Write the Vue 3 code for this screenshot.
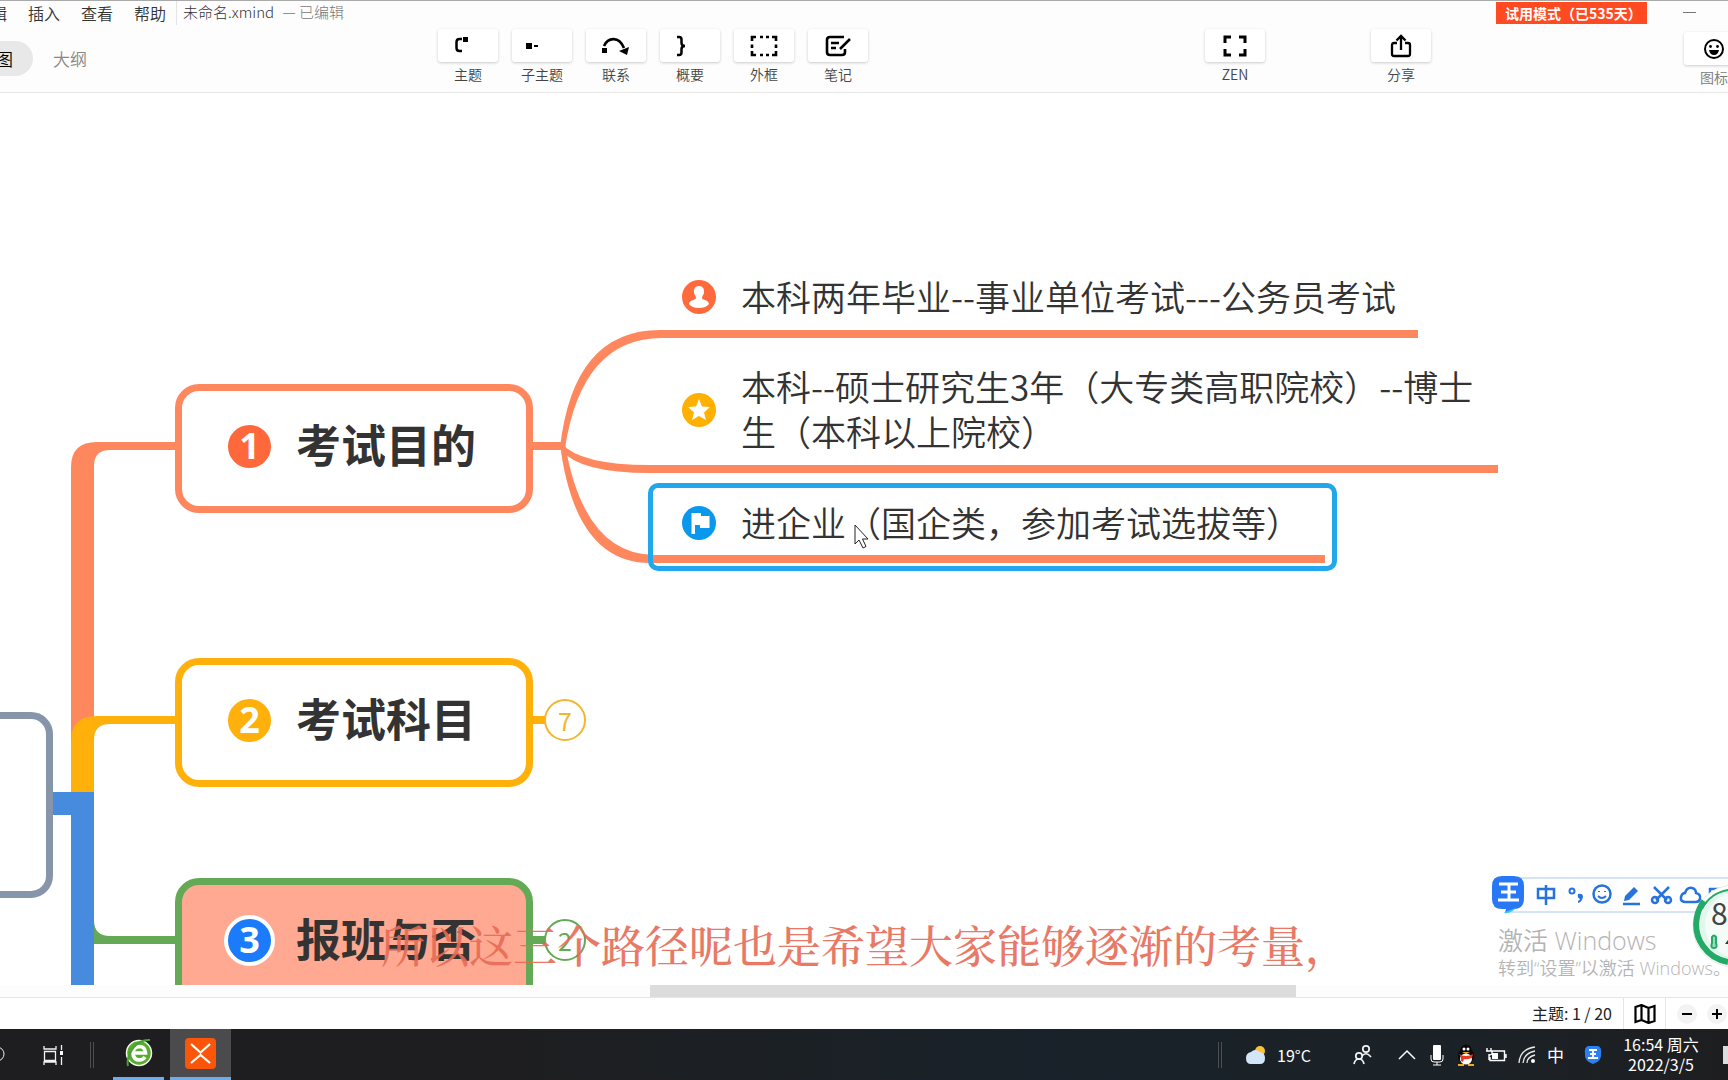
<script setup>
const menus = ['编辑', '插入', '查看', '帮助']

const tools = [
  { id: 'topic', label: '主题' },
  { id: 'subtopic', label: '子主题' },
  { id: 'relation', label: '联系' },
  { id: 'summary', label: '概要' },
  { id: 'boundary', label: '外框' },
  { id: 'note', label: '笔记' }
]
</script>

<template>
  <div class="app">
    <header class="header">
      <div class="title-row">
        <nav class="menus">
          <button v-for="m in menus" :key="m" type="button">{{ m }}</button>
        </nav>
        <p class="file">未命名.xmind <span>— 已编辑</span></p>
        <strong class="trial">试用模式（已535天）</strong>
        <button class="minimize" type="button" aria-label="最小化"></button>
      </div>

      <div class="tool-row">
        <div class="views">
          <button class="view active" type="button">思维导图</button>
          <button class="view" type="button">大纲</button>
        </div>
        <div class="tools">
          <button v-for="t in tools" :key="t.id" class="tool" type="button">
            <span class="tile">
              <svg v-if="t.id === 'topic'" width="32" height="26" viewBox="0 0 32 26">
                <path d="M10 6H7.500Q4.500 6 4.500 9V15Q4.500 18 7.500 18H10" fill="none" stroke="#000" stroke-width="2.500" />
                <rect x="11" y="4" width="5" height="5" />
              </svg>
              <svg v-else-if="t.id === 'subtopic'" width="32" height="26" viewBox="0 0 32 26">
                <rect x="0" y="10" width="6" height="6" /><rect x="8" y="12" width="4" height="2" />
              </svg>
              <svg v-else-if="t.id === 'relation'" width="32" height="26" viewBox="0 0 32 26">
                <path d="M4 13C8 4 19 3 24 15" fill="none" stroke="#000" stroke-width="2.600" />
                <rect x="2" y="15" width="5" height="5" /><path d="M19 18L29 14L27 22Z" />
              </svg>
              <svg v-else-if="t.id === 'summary'" width="32" height="26" viewBox="0 0 32 26">
                <path d="M3 4H5Q7.500 4 7.500 6.500V10Q7.500 13 11 13Q7.500 13 7.500 16V19.500Q7.500 22 5 22H3" fill="none" stroke="#000" stroke-width="2.500" />
              </svg>
              <svg v-else-if="t.id === 'boundary'" width="32" height="26" viewBox="0 0 32 26">
                <path d="M4 8V4H8M12 4H15M18 4H21M24 4H28V8M28 11.500V15M28 18V22H24M21 22H18M15 22H12M8 22H4V18M4 15V11.500" fill="none" stroke="#000" stroke-width="2.600" />
              </svg>
              <svg v-else width="32" height="26" viewBox="0 0 32 26">
                <path d="M22 4H8Q5 4 5 7V19Q5 22 8 22H20Q23 22 23 19V16M9 10H17M9 15H14M18 16L28 6" fill="none" stroke="#000" stroke-width="2.600" />
              </svg>
            </span>
            {{ t.label }}
          </button>
        </div>
        <div class="extras">
          <button class="tool zen" type="button">
            <span class="tile">
              <svg width="26" height="24" viewBox="0 0 26 24">
                <path d="M3 9V3H9M17 3H23V9M23 15V21H17M9 21H3V15" fill="none" stroke="#000" stroke-width="3" />
              </svg>
            </span>
            ZEN
          </button>
          <button class="tool share" type="button">
            <span class="tile">
              <svg width="24" height="24" viewBox="0 0 24 24">
                <path d="M8 9H5Q3 9 3 11V20Q3 22 5 22H19Q21 22 21 20V11Q21 9 19 9H16M12 16V2.500M7.500 6.500L12 2L16.500 6.500" fill="none" stroke="#000" stroke-width="2.300" />
              </svg>
            </span>
            分享
          </button>
          <button class="tool sticker" type="button">
            <span class="tile">
              <svg width="22" height="22" viewBox="0 0 22 22">
                <circle cx="11" cy="11" r="9" fill="none" stroke="#000" stroke-width="2" />
                <circle cx="7.500" cy="8.500" r="1.400" /><circle cx="14.500" cy="8.500" r="1.400" />
                <path d="M6 12H16Q15 17 11 17Q7 17 6 12Z" />
              </svg>
            </span>
            图标
          </button>
        </div>
      </div>
    </header>

    <main class="canvas">
      <svg class="links" aria-hidden="true">
        <path class="coral" d="M175 349H97Q71 349 71 374V699H94V373Q94 357 110 357H175Z" />
        <path class="amber" d="M175 623H97Q71 623 71 648V699H94V647Q94 631 110 631H175Z" />
        <path class="green" d="M94 827Q94 843 110 843H175V851H94Z" />
        <path class="blue" d="M53 699H94V900H71V722H53Z" />
        <path class="coral" d="M533 349H562V357H533Z" />
        <path class="coral" d="M560 355Q573 237 660 237H1418V245H662Q582 245 565 355Z" />
        <path class="coral" d="M561 350Q580 372 650 372H1498V380H650Q580 380 561 357Z" />
        <path class="coral" d="M560 351Q575 470 650 470H1325V462H655Q584 462 565 351Z" />
        <path class="amber" d="M533 623H545V631H533Z" />
        <path class="green" d="M533 843H545V851H533Z" />
      </svg>

      <div class="root-node"></div>

      <section class="node one">
        <span class="num">1</span><h2>考试目的</h2>
      </section>
      <section class="node two">
        <span class="num">2</span><h2>考试科目</h2>
      </section>
      <section class="node three">
        <span class="num">3</span><h2>报班与否</h2>
      </section>
      <button class="count seven" type="button">7</button>
      <button class="count pair" type="button">2</button>

      <div class="leaf first">
        <svg width="34" height="34" viewBox="0 0 34 34">
          <circle cx="17" cy="17" r="17" fill="#ff6a3d" />
          <path d="M17 6C21 6 22.500 9 22 12.500C21.700 15 20 16 20 18C20 20 27 20 27 24Q24 28 17 28Q10 28 7 24C7 20 14 20 14 18C14 16 12.300 15 12 12.500C11.500 9 13 6 17 6Z" fill="#fff" />
        </svg>
        <p>本科两年毕业--事业单位考试---公务员考试</p>
      </div>
      <div class="leaf second">
        <svg width="34" height="34" viewBox="0 0 34 34">
          <circle cx="17" cy="17" r="17" fill="#ffb000" />
          <path d="M17 6L20 13.500L28 14L22 19.500L24 27L17 23L10 27L12 19.500L6 14L14 13.500Z" fill="#fff" />
        </svg>
        <p>本科--硕士研究生3年（大专类高职院校）--博士<br>生（本科以上院校）</p>
      </div>
      <div class="leaf third">
        <svg width="34" height="34" viewBox="0 0 34 34">
          <circle cx="17" cy="17" r="17" fill="#0a98ee" />
          <path d="M9.500 7H19V10H27.500V22H18V19H13V28H9.500Z" fill="#fff" />
        </svg>
        <p>进企业（国企类，参加考试选拔等）</p>
      </div>
      <div class="selection"></div>

      <svg class="cursor" width="16" height="26" viewBox="0 0 16 26">
        <path d="M1 1V20L5 16L9 24L12 22.500L8.500 15H14Z" fill="#fff" stroke="#222" />
      </svg>
      <p class="caption">所以这三个路径呢也是希望大家能够逐渐的考量，</p>
      <div class="watermark">
        <p>激活 Windows</p>
        <small>转到“设置”以激活 Windows。</small>
      </div>

      <div class="ime">
        <svg width="250" height="42" viewBox="0 0 250 42">
          <rect x="18" y="4" width="240" height="34" fill="#fff" stroke="#a9c8f2" />
          <path d="M12 2H24Q34 2 34 12V24Q34 35 24 35L15 39L16 35H12Q2 35 2 25V12Q2 2 12 2Z" fill="#2878f5" />
          <path d="M15 38L26 34Q21 40 14 39Z" fill="#35c8f5" />
          <path d="M9 10H28M11 18H26M8 26H29M19 10V26" fill="none" stroke="#fff" stroke-width="3" />
          <g fill="none" stroke="#2673dc" stroke-width="2.500">
            <path d="M48 15H64V24H48ZM56 11V31" />
            <circle cx="82" cy="17" r="2.500" stroke-width="2" />
            <circle cx="112" cy="20" r="8.500" />
            <path d="M108 22Q112 26 116 22M109 17V18M115 17V18" stroke-width="2" />
            <path d="M133 30H150" />
            <path d="M164 13L177 26M179 13L166 26" />
            <circle cx="165" cy="26" r="3" /><circle cx="178" cy="26" r="3" />
            <path d="M196 28Q190 28 191 23Q192 19 195 19Q197 13 202 14Q206 15 206 19Q211 20 210 25Q209 28 206 28Z" />
            <path d="M219 15H240M219 21H240M220 14V28M228 14V28" />
          </g>
          <path d="M134 27L135 22L144 13L148 17L139 26ZM88 20Q93 19 93 23Q92 28 88 29V27Q90 26 90 25Q87 24 88 20Z" fill="#2673dc" />
        </svg>
      </div>
      <div class="gauge">
        <svg width="36" height="90" viewBox="0 0 36 90">
          <circle cx="42" cy="45" r="41" fill="#fff" stroke="#e4ece8" />
          <circle cx="43" cy="44" r="35" fill="#e2f7ec" />
          <circle cx="46" cy="44" r="33" fill="#f4fcf8" />
          <path d="M12 20A38 38 0 0 0 5 36A38 38 0 0 0 36 81" fill="none" stroke="#22aa66" stroke-width="6" />
          <path d="M10 28A36 36 0 0 1 36 9" fill="none" stroke="#22aa66" stroke-width="2" />
          <path d="M20 56Q22 53 24 56V62Q26 67 22 67Q18 67 20 62Z" fill="#9adabc" stroke="#22aa66" stroke-width="2" />
          <path d="M33 63L36 59V63Z" fill="#333" />
        </svg>
        <span>8</span>
      </div>
    </main>

    <div class="scrollbar"><div class="thumb"></div></div>

    <footer class="status">
      <span class="total">主题: 1 / 20</span>
      <button class="overview" type="button" aria-label="缩略图">
        <svg width="22" height="20" viewBox="0 0 22 20">
          <path d="M1.500 3L7.500 1V16L1.500 18ZM7.500 1L14.500 4V19L7.500 16M14.500 4L20.500 2V17L14.500 19" fill="none" stroke="#000" stroke-width="2.200" />
        </svg>
      </button>
      <div class="zoom">
        <button type="button" aria-label="缩小"><svg width="10" height="10"><path d="M0 5H10" stroke="#000" stroke-width="2" /></svg></button>
        <button type="button" aria-label="放大"><svg width="10" height="10"><path d="M0 5H10M5 0V10" stroke="#000" stroke-width="2" /></svg></button>
      </div>
    </footer>

    <div class="taskbar">
      <div class="pinned">
        <svg class="search" width="6" height="20" viewBox="0 0 6 20"><circle cx="-3" cy="9" r="7" fill="none" stroke="#eee" /></svg>
        <svg class="task-view" width="22" height="20" viewBox="0 0 22 20">
          <path d="M1 1V4H13V1M1.500 6.500H12.500V15.500H1.500ZM1 20V17H13V20M18.500 0V5M18.500 12V20" fill="none" stroke="#f2f2f2" stroke-width="1.300" />
          <path d="M17 6H20V10H17Z" fill="#fff" />
        </svg>
        <i class="bar"></i>
        <button class="task" type="button" aria-label="浏览器">
          <svg width="28" height="30" viewBox="0 0 28 30">
            <circle cx="14" cy="15" r="12.500" fill="#58ab2f" stroke="#f2faec" stroke-width="1.500" />
            <path d="M8 15H20.500Q20 8.500 14.500 8.500Q8 9 8 15.500Q8.500 22 14.500 22Q18 22 20 19" fill="none" stroke="#fff" stroke-width="3.600" />
            <path d="M3 28Q1 19 9 9Q16 1 25 2" fill="none" stroke="#48a030" stroke-width="2" />
          </svg>
        </button>
        <button class="task current" type="button" aria-label="XMind">
          <svg width="31" height="31" viewBox="0 0 31 31">
            <rect width="31" height="31" rx="4" fill="#fb5509" />
            <path d="M6 6L15.500 14.500L25 6M6 25L15.500 17L25 25" fill="none" stroke="#fff" stroke-width="2.200" />
          </svg>
        </button>
      </div>

      <div class="tray">
        <i class="bar"></i>
        <svg class="weather" width="22" height="20" viewBox="0 0 22 20">
          <circle cx="15" cy="6" r="5" fill="#f8c33a" />
          <path d="M6 19Q1 19 1 13Q1 8 6 7Q10 3 15 7Q20 8 20 13Q20 19 15 19Z" fill="#d3e6f8" />
        </svg>
        <span class="temp">19°C</span>
        <svg class="people" width="20" height="22" viewBox="0 0 20 22">
          <g fill="none" stroke="#f2f2f2" stroke-width="1.700"><circle cx="13" cy="5" r="3.200" /><circle cx="6" cy="12" r="3.200" /><path d="M9 12Q13 7 18 13M1 20Q2 15 6 15Q10 15 11 20" /></g>
        </svg>
        <svg class="chevron" width="18" height="12" viewBox="0 0 18 12"><path d="M1 10L9 2L17 10" fill="none" stroke="#fff" stroke-width="1.500" /></svg>
        <svg class="mic" width="14" height="22" viewBox="0 0 14 22"><rect x="3" y="1" width="8" height="15" rx="1" fill="#fff" /><path d="M1 11V15Q1 18 4 18H10Q13 18 13 15V11M7 18V21M3 21H11" fill="none" stroke="#fff" /></svg>
        <svg class="qq" width="20" height="22" viewBox="0 0 20 22">
          <ellipse cx="10" cy="12" rx="8" ry="9" fill="#0a0a0a" /><circle cx="10" cy="6" r="5.500" fill="#0a0a0a" />
          <ellipse cx="10" cy="15" rx="6" ry="5.500" fill="#fff" /><path d="M3 10Q10 14 17 10L16 14Q10 16 8 15L7 18L5 17V13Z" fill="#e63a24" />
          <circle cx="8" cy="5" r="1.500" fill="#fff" /><circle cx="12" cy="5" r="1.500" fill="#fff" /><path d="M6 8H14L10 10ZM2 20H8V22H2ZM12 20H18V22H12Z" fill="#f6a821" />
        </svg>
        <svg class="battery" width="21" height="16" viewBox="0 0 21 16"><path d="M6 4H18.500V13.500H4V10M20 7V11M1 1V4M5 1V4M0 4H6V7Q3 9 3 7V13" fill="none" stroke="#fff" stroke-width="1.400" /><rect x="6" y="6" width="6" height="6" fill="#fff" /></svg>
        <svg class="wifi" width="18" height="18" viewBox="0 0 18 18"><g fill="none" stroke="#e8e8e8" stroke-width="1.300"><path d="M1 17Q2 3 17 1M5 17Q6 7 17 5M9 17Q9 11 17 9" /></g><circle cx="15" cy="15" r="2" fill="#fff" /></svg>
        <span class="lang">中</span>
        <svg class="wang" width="18" height="20" viewBox="0 0 18 20"><path d="M4 1H14Q18 2 17 9Q18 16 9 19Q0 16 1 9Q0 2 4 1Z" fill="#2c80f2" /><path d="M5 5H13M6 9H12M4 13H14M9 5V13" stroke="#fff" stroke-width="1.800" /></svg>
        <time>16:54 周六<br>2022/3/5</time>
        <i class="notice"></i>
      </div>
    </div>
  </div>
</template>

<style>
body { margin: 0; overflow: hidden; }
</style>

<style scoped>
.app {
  display: flex;
  flex-direction: column;
  min-height: 100vh;
  overflow: hidden;
  background: #fff;
  color: #333;
  font-family: "Noto Sans CJK SC", "Noto Sans", sans-serif;
}
p, h2 { margin: 0; }
button { margin: 0; padding: 0; border: 0; background: none; color: inherit; font: inherit; }
svg { flex: none; display: block; }

.header { box-sizing: border-box; height: 93px; border-top: 1px solid #aaa; border-bottom: 1px solid #e6e6e6; background: #fdfdfd; font-weight: 350; }
.title-row { display: flex; align-items: flex-start; height: 24px; white-space: nowrap; }
.menus { display: flex; gap: 21px; margin-left: -25px; padding-right: 10px; border-right: 1px solid #e4e4e4; font-size: 16px; line-height: 24px; }
.file { margin-left: 6px; font-size: 15px; font-weight: 300; line-height: 22px; }
.file span { margin-left: 5px; color: #777; }
.trial { box-sizing: border-box; width: 151px; margin: 1px 36px 0 auto; padding-left: 9px; background: #ff4a22; color: #fff; font-size: 14px; line-height: 22px; }
.minimize { width: 13px; height: 1px; margin: 11px 32px 0 0; background: #777; }

.tool-row { display: flex; height: 67px; }
.views { display: flex; align-items: flex-start; flex: 0 0 438px; padding-top: 16px; box-sizing: border-box; font-size: 17px; line-height: 35px; }
.view { white-space: nowrap; color: #888; margin-left: 20px; }
.view.active { margin-left: -72px; padding: 0 20px 0 17px; border-radius: 18px; background: #e8e8e8; color: #000; }
.tools { display: flex; gap: 14px; padding-top: 4px; }
.tool { display: flex; flex: none; flex-direction: column; align-items: center; width: 60px; height: 58px; font-size: 14px; line-height: 20px; color: #444; white-space: nowrap; }
.tile { display: flex; align-items: center; justify-content: center; width: 60px; height: 33px; margin-bottom: 2px; border-radius: 3px; background: #fff; box-shadow: 0 1px 3px #0003; }
.extras { display: flex; margin-left: auto; margin-right: -16px; padding-top: 4px; }
.share { margin-left: 106px; }
.sticker { margin: 3px 0 0 253px; color: #777; }

.canvas { position: relative; flex: 1; overflow: hidden; }
.links { position: absolute; width: 100%; height: 100%; }
.coral { fill: #ff875e; }
.amber { fill: #ffb00a; }
.green { fill: #64a955; }
.blue { fill: #478bdf; }
.root-node { position: absolute; left: -100px; top: 619px; box-sizing: border-box; width: 153px; height: 186px; border: 7px solid #8795aa; border-radius: 22px; }
.node { position: absolute; left: 175px; box-sizing: border-box; display: flex; align-items: center; width: 358px; height: 129px; padding: 0 0 5px 42px; border: 7px solid; border-radius: 24px; background: #fff; }
.node h2 { padding-bottom: 4px; color: #333; font-size: 45px; font-weight: 700; line-height: 60px; white-space: nowrap; }
.num { display: flex; align-items: center; justify-content: center; box-sizing: border-box; width: 51px; height: 51px; margin-right: 21px; border: 4px solid #fff; border-radius: 50%; color: #fff; font-family: "Noto Sans", sans-serif; font-size: 36px; font-weight: 700; line-height: 40px; }
.one { top: 291px; border-color: #ff875e; }
.one .num { background: #ff683a; }
.two { top: 565px; border-color: #ffb00a; }
.two .num { background: #ffb00a; }
.three { top: 785px; border-color: #64a955; background: #ffa992; }
.three .num { background: #1b7bfa; }
.count { position: absolute; left: 544px; width: 42px; height: 42px; border: 2px solid; border-radius: 50%; background: #fff; font-size: 25px; line-height: 34px; }
.seven { top: 606px; color: #f5b52e; }
.pair { top: 826px; color: #64a955; }

.leaf { position: absolute; left: 682px; display: flex; align-items: center; gap: 25px; color: #333; font-size: 35px; font-weight: 350; line-height: 45px; white-space: nowrap; }
.leaf p { padding-bottom: 3px; }
.first { top: 180px; }
.second { top: 270px; }
.third { top: 406px; }
.selection { position: absolute; left: 648px; top: 390px; box-sizing: border-box; width: 689px; height: 88px; border: 5px solid #22a7ec; border-radius: 10px; }
.cursor { position: absolute; left: 854px; top: 431px; }
.caption { position: absolute; right: 0; bottom: 9px; left: 2px; color: #e66b56; font-family: "Noto Serif CJK SC", "Noto Sans CJK SC", serif; font-size: 44px; font-weight: 500; line-height: 64px; text-align: center; opacity: 0.9; white-space: nowrap; }
.watermark { position: absolute; right: 0; bottom: 5px; width: 230px; color: #b4b4b4; font-family: "Open Sans", "Noto Sans CJK SC", sans-serif; font-weight: 350; white-space: nowrap; }
.watermark p { font-size: 25px; line-height: 32px; }
.watermark small { display: block; font-size: 18px; line-height: 24px; }
.ime { position: absolute; right: -12px; bottom: 69px; }
.gauge { position: absolute; right: 0; bottom: 14px; }
.gauge span { position: absolute; left: 19px; top: 11px; color: #444; font-size: 30px; line-height: 40px; }

.scrollbar { height: 12px; border-bottom: 1px solid #e6e6e6; background: #fdfdfd; }
.thumb { width: 37.4%; height: 12px; margin-left: 37.6%; background: #dcdcdc; }
.status { display: flex; justify-content: flex-end; height: 31px; color: #222; font-size: 16px; line-height: 31px; }
.overview { display: flex; align-items: center; justify-content: center; width: 43px; margin-left: 11px; border: solid #e6e6e6; border-width: 0 1px; }
.zoom { display: flex; align-items: center; gap: 10px; padding: 0 1px 0 11px; }
.zoom button { display: flex; align-items: center; justify-content: center; width: 20px; height: 20px; border-radius: 50%; background: #f3f3f3; }

.taskbar { display: flex; justify-content: space-between; height: 51px; background: linear-gradient(90deg, #1e1e20 0 30%, #19222a 60%, #1b2227 85%, #1e1e20); color: #fff; }
.pinned, .tray { display: flex; align-items: center; }
.task-view { margin-left: 37px; }
.bar { box-sizing: border-box; width: 4px; height: 26px; border: solid #4e4e50; border-width: 0 1px; }
.pinned .bar { margin: 0 19px 0 25px; }
.task { display: flex; align-items: center; justify-content: center; box-sizing: border-box; width: 51px; height: 51px; border-bottom: 3px solid #6dadea; }
.current { width: 61px; margin-left: 6px; background: #4b4b4d; }
.weather { margin: 0 10px 0 23px; }
.temp { width: 76px; font-size: 16px; }
.chevron { margin-left: 25px; }
.mic { margin-left: 14px; }
.qq { margin-left: 12px; }
.battery { margin-left: 10px; }
.wifi { margin-left: 11px; }
.lang { margin-left: 11px; font-size: 17px; }
.wang { margin-left: 20px; }
time { width: 80px; margin: 0 22px 0 19px; padding-bottom: 2px; font-size: 16px; line-height: 20px; text-align: center; white-space: nowrap; }
.notice { width: 5px; height: 18px; background: #ddd; }
</style>
